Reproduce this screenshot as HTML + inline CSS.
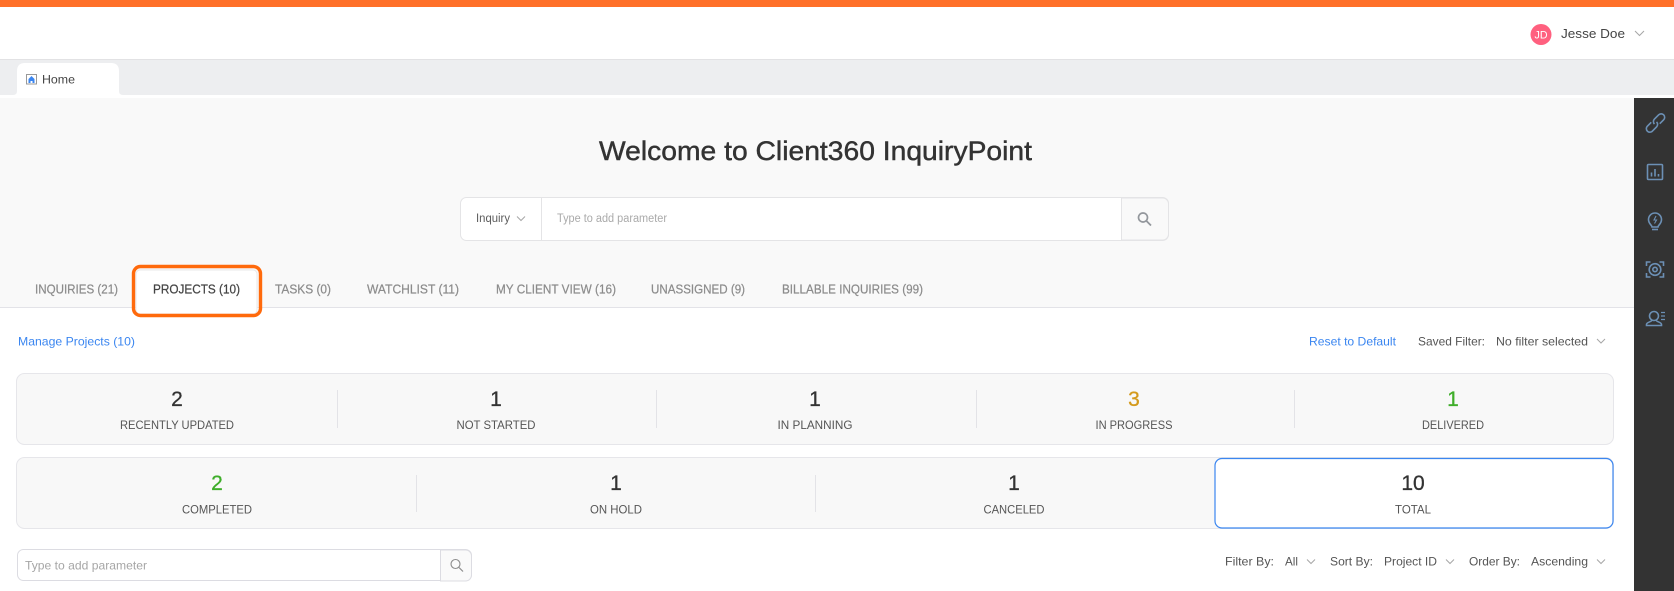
<!DOCTYPE html>
<html><head><meta charset="utf-8"><title>Client360 InquiryPoint</title>
<style>
html,body{margin:0;padding:0;background:#fff;width:1674px;height:591px;overflow:hidden}
svg{display:block}
text{font-family:"Liberation Sans",Arial,sans-serif;font-size:12px;fill:#555}
.tab{fill:#8c8c8c;stroke:#8c8c8c;stroke-width:.22px;font-size:12.5px}
.lnk{fill:#3b86f0}
.lab{fill:#555;font-size:12px}
.num{color:#333;fill:currentColor;stroke:currentColor;stroke-width:.3px;font-size:21px}
.chev{fill:none;stroke:#a6a6a6;stroke-width:1}
.ic{fill:none;stroke:#6c90b5;stroke-width:1.6}
</style></head><body>
<svg width="1674" height="591" viewBox="0 0 1674 591" xmlns="http://www.w3.org/2000/svg">
<rect width="1674" height="591" fill="#fff"/>
<rect width="1674" height="7" fill="#ff7029"/>
<rect y="59" width="1674" height="1" fill="#e2e2e4"/>
<rect y="60" width="1674" height="35" fill="#edeef0"/>
<rect y="95" width="1674" height="3" fill="#fff"/>
<rect y="98" width="1674" height="209" fill="#f9f9f9"/>
<path d="M13 95q4 0 4-4V71q0-8 8-8h86q8 0 8 8v20q0 4 4 4l0 3H13z" fill="#fff"/>
<rect x="26.500" y="74.500" width="10" height="9.500" fill="#fff" stroke="#999"/>
<path d="M28.500 83v-4l3-3 3 3v4h-2v-2h-2v2z" fill="#3b86f0"/>
<text x="42" y="83.500" textLength="33" lengthAdjust="spacingAndGlyphs" style="fill:#444">Home</text>
<circle cx="1541" cy="34.500" r="10.500" fill="#ff607f"/>
<text x="1534.500" y="38.500" textLength="13" lengthAdjust="spacingAndGlyphs" style="fill:#fff;font-size:11px">JD</text>
<text x="1561" y="38" textLength="64" lengthAdjust="spacingAndGlyphs" style="fill:#444;font-size:13px">Jesse Doe</text>
<path class="chev" d="M1635 31l4.500 4.500 4.500-4.500"/>

<text x="599" y="160" textLength="433" lengthAdjust="spacingAndGlyphs" style="fill:#333;stroke:#333;stroke-width:.45px;font-size:27px">Welcome to Client360 InquiryPoint</text>

<rect x="460.500" y="197.500" width="708" height="43" rx="6" fill="#fff" stroke="#e4e4e6"/>
<path d="M1121.500 198h41a6 6 0 0 1 6 6v30a6 6 0 0 1-6 6h-41z" fill="#f9f9f9" stroke="#e4e4e6"/>
<rect x="541" y="198" width="1" height="42" fill="#e4e4e6"/>
<text x="476" y="222" textLength="34" lengthAdjust="spacingAndGlyphs" style="fill:#5c5c5c;font-size:11.500px">Inquiry</text>
<path class="chev" d="M517 216.500l4 4 4-4"/>
<text x="557" y="222" textLength="110" lengthAdjust="spacingAndGlyphs" style="fill:#aaa;font-size:11.500px">Type to add parameter</text>
<circle cx="1143" cy="217.500" r="4.500" fill="none" stroke="#93979c" stroke-width="1.700"/>
<path d="M1146.500 221l4.500 4.500" stroke="#93979c" stroke-width="1.800" fill="none"/>

<rect y="307" width="1634" height="1" fill="#e3e3e8"/>
<rect x="136" y="270" width="121" height="44" rx="4" fill="#fff" stroke="#e8e8ea"/>
<rect x="133.500" y="266.500" width="127" height="49" rx="7" fill="none" stroke="#ff6a0c" stroke-width="3.400"/>
<text class="tab" x="35" y="293.500" textLength="83" lengthAdjust="spacingAndGlyphs">INQUIRIES (21)</text>
<text class="tab" x="153" y="293.500" textLength="87" lengthAdjust="spacingAndGlyphs" style="fill:#444;stroke:#444">PROJECTS (10)</text>
<text class="tab" x="275" y="293.500" textLength="56" lengthAdjust="spacingAndGlyphs">TASKS (0)</text>
<text class="tab" x="367" y="293.500" textLength="92" lengthAdjust="spacingAndGlyphs">WATCHLIST (11)</text>
<text class="tab" x="496" y="293.500" textLength="120" lengthAdjust="spacingAndGlyphs">MY CLIENT VIEW (16)</text>
<text class="tab" x="651" y="293.500" textLength="94" lengthAdjust="spacingAndGlyphs">UNASSIGNED (9)</text>
<text class="tab" x="782" y="293.500" textLength="141" lengthAdjust="spacingAndGlyphs">BILLABLE INQUIRIES (99)</text>

<text class="lnk" x="18" y="345.500" textLength="117" lengthAdjust="spacingAndGlyphs">Manage Projects (10)</text>
<text class="lnk" x="1309" y="345.500" textLength="87" lengthAdjust="spacingAndGlyphs">Reset to Default</text>
<text x="1418" y="345.500" textLength="67" lengthAdjust="spacingAndGlyphs">Saved Filter:</text>
<text x="1496" y="345.500" textLength="92" lengthAdjust="spacingAndGlyphs">No filter selected</text>
<path class="chev" d="M1597 339l4 4 4-4"/>

<rect x="16.500" y="373.500" width="1597" height="71" rx="8" fill="#f8f8f8" stroke="#e6e6ea"/>
<g fill="#e3e3e7"><rect x="337" y="390" width="1" height="38"/><rect x="656" y="390" width="1" height="38"/><rect x="976" y="390" width="1" height="38"/><rect x="1294" y="390" width="1" height="38"/></g>
<g text-anchor="middle">
<text class="num" x="177" y="406">2</text><text class="num" x="496" y="406">1</text><text class="num" x="815" y="406">1</text><text class="num" x="1134" y="406" style="color:#d49a1c">3</text><text class="num" x="1453" y="406" style="color:#3fae2a">1</text>
<text class="lab" x="177" y="429" textLength="114" lengthAdjust="spacingAndGlyphs">RECENTLY UPDATED</text>
<text class="lab" x="496" y="429" textLength="79" lengthAdjust="spacingAndGlyphs">NOT STARTED</text>
<text class="lab" x="815" y="429" textLength="75" lengthAdjust="spacingAndGlyphs">IN PLANNING</text>
<text class="lab" x="1134" y="429" textLength="77" lengthAdjust="spacingAndGlyphs">IN PROGRESS</text>
<text class="lab" x="1453" y="429" textLength="62" lengthAdjust="spacingAndGlyphs">DELIVERED</text>
</g>

<rect x="16.500" y="457.500" width="1597" height="71" rx="8" fill="#f8f8f8" stroke="#e6e6ea"/>
<g fill="#e3e3e7"><rect x="416" y="475" width="1" height="37"/><rect x="815" y="475" width="1" height="37"/></g>
<rect x="1215" y="458.500" width="398" height="69.500" rx="7" fill="#fff" stroke="#3b86f0" stroke-width="1.200"/>
<g text-anchor="middle">
<text class="num" x="217" y="490" style="color:#3fae2a">2</text><text class="num" x="616" y="490">1</text><text class="num" x="1014" y="490">1</text><text class="num" x="1413" y="490">10</text>
<text class="lab" x="217" y="513.500" textLength="70" lengthAdjust="spacingAndGlyphs">COMPLETED</text>
<text class="lab" x="616" y="513.500" textLength="52" lengthAdjust="spacingAndGlyphs">ON HOLD</text>
<text class="lab" x="1014" y="513.500" textLength="61" lengthAdjust="spacingAndGlyphs">CANCELED</text>
<text class="lab" x="1413" y="513.500" textLength="36" lengthAdjust="spacingAndGlyphs">TOTAL</text>
</g>

<rect x="17.500" y="549.500" width="454" height="31" rx="6" fill="#fff" stroke="#dcdce2"/>
<path d="M440.500 550h25a6 6 0 0 1 6 6v19a6 6 0 0 1-6 6h-25z" fill="#fafafa" stroke="#dcdce2"/>
<text x="25" y="569.500" textLength="122" lengthAdjust="spacingAndGlyphs" style="fill:#a6a6a6">Type to add parameter</text>
<circle cx="455.500" cy="564" r="4.500" fill="none" stroke="#8c8c8c" stroke-width="1.100"/>
<path d="M459 567.500l4 4" stroke="#8c8c8c" stroke-width="1.200" fill="none"/>

<text x="1225" y="565.500" textLength="49" lengthAdjust="spacingAndGlyphs">Filter By:</text>
<text x="1285" y="565.500" textLength="13" lengthAdjust="spacingAndGlyphs">All</text>
<path class="chev" d="M1307 559.500l4 4 4-4"/>
<text x="1330" y="565.500" textLength="43" lengthAdjust="spacingAndGlyphs">Sort By:</text>
<text x="1384" y="565.500" textLength="53" lengthAdjust="spacingAndGlyphs">Project ID</text>
<path class="chev" d="M1446 559.500l4 4 4-4"/>
<text x="1469" y="565.500" textLength="51" lengthAdjust="spacingAndGlyphs">Order By:</text>
<text x="1531" y="565.500" textLength="57" lengthAdjust="spacingAndGlyphs">Ascending</text>
<path class="chev" d="M1597 559.500l4 4 4-4"/>

<rect x="1634" y="98" width="40" height="493" fill="#333"/>
<g class="ic">
<g transform="rotate(-45 1655.500 123)">
<path d="M1653 119.500h-5.500a3.500 3.500 0 0 0 0 7h6a3.500 3.500 0 0 0 3.500-3.500"/>
<path d="M1658 126.500h5.500a3.500 3.500 0 0 0 0-7h-6a3.500 3.500 0 0 0-3.500 3.500"/>
</g>
<rect x="1647.500" y="164.500" width="15" height="15" rx="1"/>
<path d="M1651.500 176.500v-4M1655 176.500v-7.500M1658.500 176.500v-2.500"/>
<path d="M1652 227c0-2-3.500-3-3.500-7.500a6.500 6.500 0 0 1 13 0c0 4.500-3.500 5.500-3.500 7.500z"/>
<path d="M1652 229.500h6"/>
<path d="M1656 216l-2 4h2.500l-2 3.500" stroke-width="1.100"/>
<path d="M1646.500 266v-4h4M1659.500 262h4v4M1663.500 273v4h-4M1650.500 277h-4v-4"/>
<circle cx="1655" cy="269.500" r="2.200"/>
<circle cx="1655" cy="269.500" r="5.800"/>
<circle cx="1654" cy="316" r="4.500"/>
<path d="M1651.500 320.500c0 1.500-5 1.500-5 4v1h15v-1c0-2.500-5-2.500-5-4"/>
<path d="M1661 312.500h4M1661 316h4M1661 319.500h4" stroke-width="1.300"/>
</g>
</svg>
</body></html>
